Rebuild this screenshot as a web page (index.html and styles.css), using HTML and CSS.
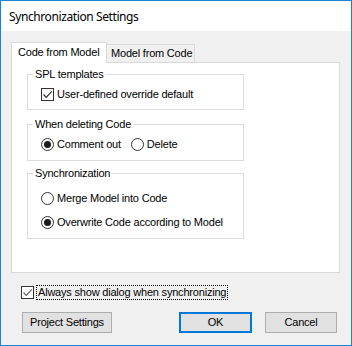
FILE: index.html
```html
<!DOCTYPE html>
<html>
<head>
<meta charset="utf-8">
<link rel="stylesheet" href="styles.css">
</head>
<body>
<div class="window">
  <div class="titlebar">Synchronization Settings</div>
  <div class="body">
    <div class="tabs">
      <div class="tab active">Code from Model</div>
      <div class="tab">Model from Code</div>
    </div>
    <div class="panel">
      <fieldset class="group g1">
        <legend>SPL templates</legend>
        <div class="row">
          <span class="check"><svg width="11" height="11" viewBox="0 0 11 11"><polyline points="1.5,5.5 4.2,8.3 9.8,2.3" fill="none" stroke="#333" stroke-width="1.2"/></svg></span>
          <span class="label">User-defined override default</span>
        </div>
      </fieldset>
      <fieldset class="group g2">
        <legend>When deleting Code</legend>
        <div class="row">
          <span class="radio on"></span><span class="label">Comment out</span>
          <span class="radio second"></span><span class="label">Delete</span>
        </div>
      </fieldset>
      <fieldset class="group g3">
        <legend>Synchronization</legend>
        <div class="row">
          <span class="radio"></span><span class="label">Merge Model into Code</span>
        </div>
        <div class="row r2">
          <span class="radio on"></span><span class="label">Overwrite Code according to Model</span>
        </div>
      </fieldset>
    </div>
    <div class="always">
      <span class="check"><svg width="11" height="11" viewBox="0 0 11 11"><polyline points="1.5,5.5 4.2,8.3 9.8,2.3" fill="none" stroke="#666" stroke-width="1.2"/></svg></span>
      <span class="focus">Always show dialog when synchronizing</span>
    </div>
    <div class="buttons">
      <div class="btn ps">Project Settings</div>
      <div class="spacer"></div>
      <div class="btn ok">OK</div>
      <div class="btn cancel">Cancel</div>
    </div>
  </div>
</div>
</body>
</html>
```
FILE: styles.css
```css
* { box-sizing: border-box; }
html, body { margin: 0; padding: 0; }
body {
  width: 352px;
  height: 346px;
  font-family: "Liberation Sans", Arial, sans-serif;
  font-size: 11px;
  letter-spacing: -0.2px;
  color: #000;
}
.window {
  width: 352px;
  height: 346px;
  border: 1px solid #1883d7;
  background: #f0f0f0;
  display: flex;
  flex-direction: column;
}
.titlebar {
  height: 30px;
  line-height: 31px;
  background: #fff;
  padding-left: 8px;
  font-family: "Noto Sans", "Open Sans", sans-serif;
  font-size: 12px;
  letter-spacing: -0.4px;
}
.body {
  padding: 11px 0 0 10px;
  display: flex;
  flex-direction: column;
}
.tabs {
  display: flex;
  align-items: flex-end;
}
.tab {
  height: 18px;
  line-height: 17px;
  width: 88px;
  border: 1px solid #d9d9d9;
  border-left: none;
  border-bottom: none;
  background: #f0f0f0;
  padding-left: 4px;
}
.tab.active {
  width: 96px;
  height: 21px;
  line-height: 19px;
  border-left: 1px solid #d9d9d9;
  background: #fff;
  margin-bottom: -1px;
  position: relative;
  z-index: 1;
  padding-left: 6px;
}
.panel {
  width: 329px;
  height: 211px;
  background: #fff;
  border: 1px solid #d9d9d9;
  padding: 5px 0 0 15px;
}
.group {
  margin: 0;
  width: 217px;
  border: 1px solid #dcdcdc;
  padding: 8px 0 8px 13px;
  min-width: 0;
}
.group legend {
  padding: 0 2px;
  margin-left: -8px;
  line-height: 12px;
  height: 12px;
}
.g2 { margin-top: 8px; padding-bottom: 9px; }
.g3 { margin-top: 6px; padding-top: 13px; padding-bottom: 9px; }
.r2 { margin-top: 11px; }
.row {
  display: flex;
  align-items: center;
  height: 13px;
}
.label { margin-left: 3px; line-height: 13px; }
.check {
  width: 13px;
  height: 13px;
  border: 1px solid #333;
  background: #fff;
  display: flex;
  align-items: center;
  justify-content: center;
  flex: none;
}
.radio {
  width: 13px;
  height: 13px;
  border: 1px solid #333;
  border-radius: 50%;
  background: #fff;
  flex: none;
  display: flex;
  align-items: center;
  justify-content: center;
}
.radio.on::after {
  content: "";
  width: 7px;
  height: 7px;
  border-radius: 50%;
  background: #1a1a1a;
}
.radio.second { margin-left: 10px; }
.always {
  display: flex;
  align-items: flex-end;
  margin-top: 12px;
  padding-left: 10px;
  height: 15px;
}
.always .check { margin-bottom: 1px; }
.focus {
  margin-left: 2px;
  border: 1px dotted #000;
  height: 15px;
  line-height: 13px;
  padding: 0 1px 0 1px;
}
.buttons {
  display: flex;
  margin-top: 12px;
  padding-left: 11px;
  width: 326px;
}
.spacer { flex: 1; }
.btn {
  height: 21px;
  border: 1px solid #adadad;
  background: #e1e1e1;
  text-align: center;
  line-height: 19px;
}
.ps { width: 90px; }
.ok { width: 73px; border: 2px solid #0078d7; line-height: 17px; }
.cancel { width: 72px; margin-left: 13px; }
```
